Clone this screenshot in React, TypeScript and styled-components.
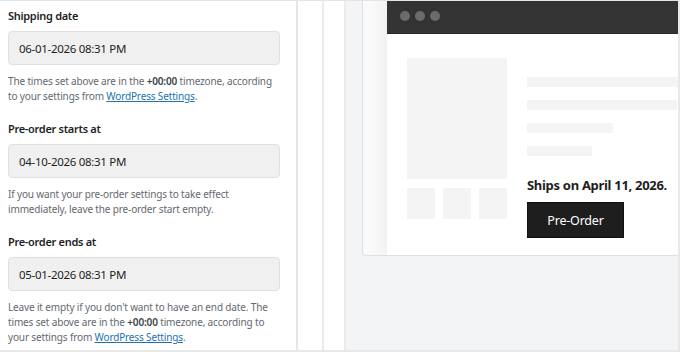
import React from 'react'
import styled, { createGlobalStyle } from 'styled-components'

const GlobalStyle = createGlobalStyle`
  html, body {
    margin: 0;
    padding: 0;
    background: #ffffff;
  }
  * {
    box-sizing: border-box;
  }
`

const Frame = styled.div`
  width: 680px;
  height: 352px;
  display: flex;
  overflow: hidden;
  border-top: 1px solid #e4e4e4;
  border-right: 2px solid #e8e8e8;
  border-bottom: 2px solid #e8e8e8;
  font-family: 'Noto Sans', 'Open Sans', sans-serif;
  background: #ffffff;
`

const SettingsPanel = styled.div`
  width: 298px;
  flex-shrink: 0;
  padding: 6px 16px 0 8px;
  border-right: 2px solid #e6e6e6;
`

const Field = styled.div`
  margin-bottom: 16px;
`

const Label = styled.div`
  font-size: 11px;
  letter-spacing: -0.3px;
  line-height: 18px;
  font-weight: 600;
  color: #1e1e1e;
  margin-bottom: 6px;
`

const DateInput = styled.div`
  height: 34px;
  display: flex;
  align-items: center;
  padding: 0 10px;
  background: #f0f0f0;
  border: 1px solid #e0e0e0;
  border-radius: 4px;
  font-size: 11.5px;
  letter-spacing: -0.3px;
  color: #1e1e1e;
`

const Help = styled.p`
  margin: 9px 0 0;
  font-size: 10px;
  letter-spacing: -0.15px;
  line-height: 15px;
  color: #646970;
  white-space: nowrap;

  strong {
    font-weight: 600;
    color: #3c434a;
  }

  a {
    color: #2271b1;
    text-decoration: underline;
  }
`

const Gutter = styled.div<{ $width: number }>`
  width: ${(p) => p.$width}px;
  flex-shrink: 0;
  border-right: 2px solid #ebebeb;
`

const Canvas = styled.div`
  flex: 1;
  background: #f3f4f6;
  padding-left: 16px;
`

const Card = styled.div`
  height: 255px;
  display: flex;
  padding-left: 24px;
  overflow: hidden;
  background: linear-gradient(to right, #fafafa, #ffffff);
  border: 1px solid #dfe0e2;
  border-top: none;
  border-radius: 0 0 4px 4px;
`

const Mockup = styled.div`
  flex: 1;
  background: #ffffff;
  box-shadow: -6px 0 14px rgba(0, 0, 0, 0.05);
`

const BrowserBar = styled.div`
  height: 33px;
  display: flex;
  align-items: center;
  gap: 5px;
  padding: 0 0 2px 13px;
  background: #333333;
  border-bottom: 1px solid #2a2a2a;
`

const Dot = styled.span`
  width: 10px;
  height: 10px;
  border-radius: 50%;
  background: #6b6b6b;
`

const PageBody = styled.div`
  display: flex;
  gap: 20px;
  padding: 24px 20px;
`

const Gallery = styled.div`
  width: 100px;
  flex-shrink: 0;
`

const Placeholder = styled.div<{ $w: number; $h: number }>`
  width: ${(p) => p.$w}px;
  height: ${(p) => p.$h}px;
  background: #f4f4f4;
  flex-shrink: 0;
`

const Thumbs = styled.div`
  display: flex;
  gap: 8px;
  margin-top: 9px;
`

const Info = styled.div`
  flex: 1;
  padding-top: 19px;
  display: flex;
  flex-direction: column;
  gap: 13px;
`

const Ships = styled.div`
  font-size: 13px;
  letter-spacing: -0.3px;
  line-height: 20px;
  font-weight: 700;
  color: #1e1e1e;
  margin-top: 6px;
  white-space: nowrap;
`

const OrderButton = styled.div`
  width: 97px;
  height: 36px;
  margin-top: -6px;
  display: flex;
  align-items: center;
  justify-content: center;
  background: #1e1e1e;
  border: 1px solid #111;
  color: #ffffff;
  font-size: 12.5px;
  letter-spacing: -0.2px;
`

const WpLink = () => <a href="#">WordPress Settings</a>

export default function App() {
  return (
    <>
      <GlobalStyle />
      <Frame>
        <SettingsPanel>
          <Field>
            <Label>Shipping date</Label>
            <DateInput>06-01-2026 08:31 PM</DateInput>
            <Help>
              The times set above are in the <strong>+00:00</strong> timezone, according
              <br />
              to your settings from <WpLink />.
            </Help>
          </Field>
          <Field>
            <Label>Pre-order starts at</Label>
            <DateInput>04-10-2026 08:31 PM</DateInput>
            <Help>
              If you want your pre-order settings to take effect
              <br />
              immediately, leave the pre-order start empty.
            </Help>
          </Field>
          <Field>
            <Label>Pre-order ends at</Label>
            <DateInput>05-01-2026 08:31 PM</DateInput>
            <Help>
              Leave it empty if you don't want to have an end date. The
              <br />
              times set above are in the <strong>+00:00</strong> timezone, according to
              <br />
              your settings from <WpLink />.
            </Help>
          </Field>
        </SettingsPanel>
        <Gutter $width={26} />
        <Gutter $width={22} />
        <Canvas>
          <Card>
            <Mockup>
              <BrowserBar>
                <Dot />
                <Dot />
                <Dot />
              </BrowserBar>
              <PageBody>
                <Gallery>
                  <Placeholder $w={100} $h={121} />
                  <Thumbs>
                    <Placeholder $w={28} $h={31} />
                    <Placeholder $w={28} $h={31} />
                    <Placeholder $w={28} $h={31} />
                  </Thumbs>
                </Gallery>
                <Info>
                  <Placeholder $w={170} $h={10} />
                  <Placeholder $w={150} $h={10} />
                  <Placeholder $w={86} $h={10} />
                  <Placeholder $w={65} $h={10} />
                  <Ships>Ships on April 11, 2026.</Ships>
                  <OrderButton>Pre-Order</OrderButton>
                </Info>
              </PageBody>
            </Mockup>
          </Card>
        </Canvas>
      </Frame>
    </>
  )
}
